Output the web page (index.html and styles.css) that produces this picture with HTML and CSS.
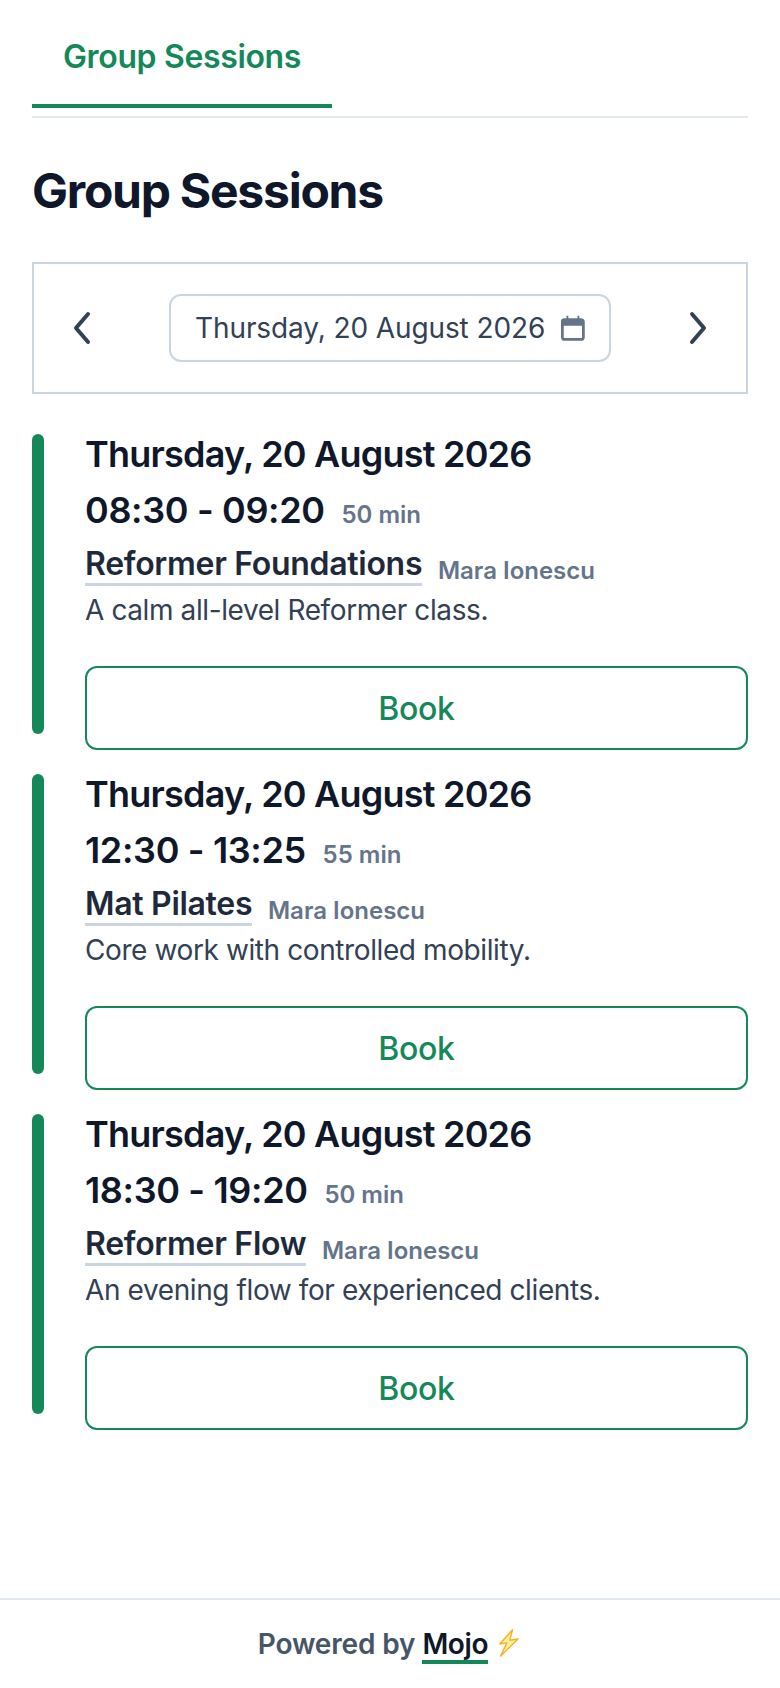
FILE: index.html

```html
<!DOCTYPE html>
<html lang="en">
<head>
  <meta charset="UTF-8" />
  <meta name="viewport" content="width=device-width, initial-scale=1.0"/>
  <title>Group Sessions</title>
  <link rel="stylesheet" href="styles.css">
</head>
<body>

  <main class="page">
    <nav class="tabs">
      <a class="tab" href="#">Group Sessions</a>
    </nav>

    <h1>Group Sessions</h1>

    <div class="date-nav">
      <button class="arrow" aria-label="Previous day">
        <svg viewBox="0 0 24 44" width="24" height="44"><path d="M18 8 L6 22 L18 36"/></svg>
      </button>
      <button class="date-pick">
        <span>Thursday, 20 August 2026</span>
        <svg class="cal" viewBox="0 0 26 28" width="26" height="28">
          <path class="cal-top" d="M6 0.5 h2 v3 h10 v-3 h2 v3 h2 a3 3 0 0 1 3 3 v5 h-25 v-5 a3 3 0 0 1 3 -3 h3 z"/>
          <rect class="cal-body" x="1.5" y="5" width="23" height="21.5" rx="2.5"/>
        </svg>
      </button>
      <button class="arrow" aria-label="Next day">
        <svg viewBox="0 0 24 44" width="24" height="44"><path d="M6 8 L18 22 L6 36"/></svg>
      </button>
    </div>

    <section class="session">
      <div class="bar"></div>
      <div class="info">
        <div class="day">Thursday, 20 August 2026</div>
        <div class="time">08:30 - 09:20 <small>50 min</small></div>
        <div class="title"><a href="#">Reformer Foundations</a> <small>Mara Ionescu</small></div>
        <p>A calm all-level Reformer class.</p>
        <button class="book">Book</button>
      </div>
    </section>

    <section class="session">
      <div class="bar"></div>
      <div class="info">
        <div class="day">Thursday, 20 August 2026</div>
        <div class="time">12:30 - 13:25 <small>55 min</small></div>
        <div class="title"><a href="#">Mat Pilates</a> <small>Mara Ionescu</small></div>
        <p>Core work with controlled mobility.</p>
        <button class="book">Book</button>
      </div>
    </section>

    <section class="session">
      <div class="bar"></div>
      <div class="info">
        <div class="day">Thursday, 20 August 2026</div>
        <div class="time">18:30 - 19:20 <small>50 min</small></div>
        <div class="title"><a href="#">Reformer Flow</a> <small>Mara Ionescu</small></div>
        <p>An evening flow for experienced clients.</p>
        <button class="book">Book</button>
      </div>
    </section>
  </main>

  <footer>
    <span>Powered by</span>
    <a href="#">Mojo</a>
    <svg class="bolt" viewBox="0 0 20 28" width="20" height="28">
      <path d="M13.5 0.8 L0.8 15 L8 13.6 L1.5 27.2 L19 10 L10.8 11.2 Z"/>
    </svg>
  </footer>

</body>
</html>
```

FILE: styles.css

```css
* {
  box-sizing: border-box;
}
body {
  font-family: 'Inter', sans-serif;
  background-color: #ffffff;
  color: #0f172a;
  margin: 0;
  height: 1688px;
  display: flex;
  flex-direction: column;
}
.page {
  flex: 1;
  padding: 0 32px;
}
.tabs {
  display: flex;
  height: 118px;
  border-bottom: 2px solid #e2e8f0;
}
.tab {
  width: 300px;
  height: 108px;
  padding-top: 37px;
  text-align: center;
  font-size: 32px;
  line-height: 40px;
  letter-spacing: -0.36px;
  font-weight: 600;
  color: #15885a;
  text-decoration: none;
  border-bottom: 4px solid #15885a;
}
h1 {
  margin: 45px 0 43px;
  font-size: 48px;
  line-height: 56px;
  letter-spacing: -1.25px;
  font-weight: 700;
}
.date-nav {
  display: flex;
  justify-content: space-between;
  align-items: center;
  height: 132px;
  padding: 0 36px;
  border: 2px solid #cbd5e1;
}
.arrow {
  padding: 0;
  border: 0;
  background: none;
  display: flex;
}
.arrow path {
  fill: none;
  stroke: #334155;
  stroke-width: 4;
  stroke-linecap: round;
  stroke-linejoin: round;
}
.date-pick {
  display: flex;
  align-items: center;
  gap: 16px;
  width: 442px;
  height: 68px;
  padding: 0 24px;
  font-family: inherit;
  font-size: 28px;
  letter-spacing: -0.1px;
  color: #334155;
  background: #fff;
  border: 2px solid #cbd5e1;
  border-radius: 12px;
  white-space: nowrap;
}
.cal-top {
  fill: #64748b;
}
.cal-body {
  fill: none;
  stroke: #64748b;
  stroke-width: 3;
}
.session {
  display: flex;
  align-items: flex-start;
  gap: 41px;
  height: 340px;
}
.date-nav + .session {
  margin-top: 40px;
}
.bar {
  flex: none;
  width: 12px;
  height: 300px;
  border-radius: 6px;
  background-color: #15885a;
}
.info {
  flex: 1;
}
.day {
  font-size: 36px;
  line-height: 40px;
  letter-spacing: -0.78px;
  font-weight: 600;
}
.time {
  margin-top: 14px;
  font-size: 36px;
  line-height: 44px;
  letter-spacing: -0.35px;
  font-weight: 600;
}
.time small, .title small {
  margin-left: 8px;
  font-size: 24px;
  letter-spacing: 0;
  font-weight: 600;
  color: #64748b;
}
.title {
  margin-top: 5px;
  height: 44px;
  font-size: 32px;
  line-height: 44px;
  letter-spacing: -0.3px;
  font-weight: 600;
  color: #1e293b;
}
.title small {
  vertical-align: -4px;
}
.title a {
  color: inherit;
  text-decoration: none;
  border-bottom: 3px solid #cbd5e1;
}
.info p {
  margin: 4px 0 0;
  font-size: 28px;
  line-height: 40px;
  letter-spacing: -0.4px;
  color: #334155;
}
.book {
  display: block;
  width: 100%;
  height: 84px;
  margin-top: 36px;
  font-family: inherit;
  font-size: 32px;
  font-weight: 500;
  letter-spacing: -0.3px;
  color: #15885a;
  background: #fff;
  border: 2px solid #15885a;
  border-radius: 12px;
}
footer {
  height: 90px;
  padding: 27px 3px 0 0;
  border-top: 2px solid #e2e8f0;
  display: flex;
  justify-content: center;
  align-items: baseline;
  gap: 8px;
  font-size: 28px;
  line-height: 34px;
  font-weight: 600;
  letter-spacing: -0.15px;
  color: #475569;
}
footer a {
  height: 37px;
  margin-left: -1px;
  letter-spacing: -0.35px;
  color: #0f172a;
  text-decoration: none;
  border-bottom: 4px solid #15885a;
}
.bolt {
  align-self: flex-start;
  margin: 2px 0 0 3px;
}
.bolt path {
  fill: #fef3a0;
  stroke: #fbb024;
  stroke-width: 1.4;
  stroke-linejoin: round;
}
```
